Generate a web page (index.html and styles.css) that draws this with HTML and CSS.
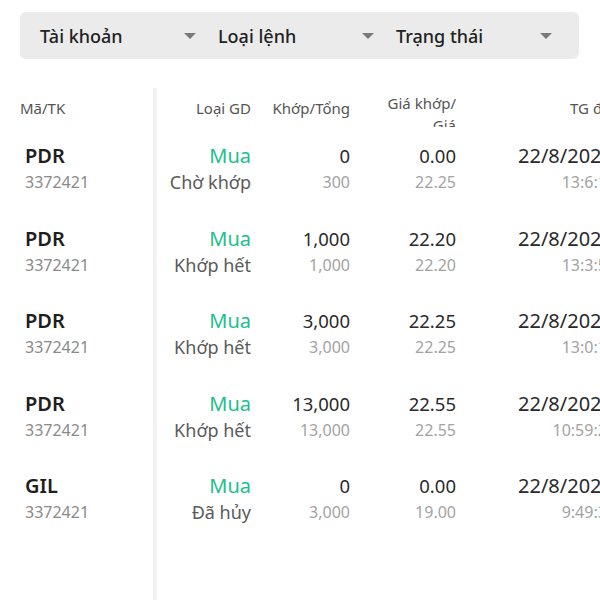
FILE: index.html
```html
<!DOCTYPE html>
<html lang="vi">
<head>
<meta charset="utf-8">
<link rel="stylesheet" href="styles.css">
</head>
<body>
<div class="page">
  <div class="filters">
    <div class="filter"><span>Tài khoản</span><i class="caret"></i></div>
    <div class="filter"><span>Loại lệnh</span><i class="caret"></i></div>
    <div class="filter"><span>Trạng thái</span><i class="caret"></i></div>
  </div>

  <div class="table">
    <div class="fixed">
      <div class="head"><div class="h-left">Mã/TK</div></div>
      <div class="row"><div class="sym">PDR</div><div class="acc">3372421</div></div>
      <div class="row"><div class="sym">PDR</div><div class="acc">3372421</div></div>
      <div class="row"><div class="sym">PDR</div><div class="acc">3372421</div></div>
      <div class="row"><div class="sym">PDR</div><div class="acc">3372421</div></div>
      <div class="row"><div class="sym">GIL</div><div class="acc">3372421</div></div>
    </div>
    <div class="scroll">
      <div class="head cols">
        <div class="hc">Loại GD</div>
        <div class="hc">Khớp/Tổng</div>
        <div class="hc two">Giá khớp/<br>Giá</div>
        <div class="hc">TG đặt</div>
      </div>
      <div class="row cols">
        <div class="c"><div class="buy">Mua</div><div class="status">Chờ khớp</div></div>
        <div class="c"><div class="main">0</div><div class="sub">300</div></div>
        <div class="c"><div class="main">0.00</div><div class="sub">22.25</div></div>
        <div class="c"><div class="main date">22/8/2022</div><div class="sub">13:6:12</div></div>
      </div>
      <div class="row cols">
        <div class="c"><div class="buy">Mua</div><div class="status">Khớp hết</div></div>
        <div class="c"><div class="main">1,000</div><div class="sub">1,000</div></div>
        <div class="c"><div class="main">22.20</div><div class="sub">22.20</div></div>
        <div class="c"><div class="main date">22/8/2022</div><div class="sub">13:3:55</div></div>
      </div>
      <div class="row cols">
        <div class="c"><div class="buy">Mua</div><div class="status">Khớp hết</div></div>
        <div class="c"><div class="main">3,000</div><div class="sub">3,000</div></div>
        <div class="c"><div class="main">22.25</div><div class="sub">22.25</div></div>
        <div class="c"><div class="main date">22/8/2022</div><div class="sub">13:0:12</div></div>
      </div>
      <div class="row cols">
        <div class="c"><div class="buy">Mua</div><div class="status">Khớp hết</div></div>
        <div class="c"><div class="main">13,000</div><div class="sub">13,000</div></div>
        <div class="c"><div class="main">22.55</div><div class="sub">22.55</div></div>
        <div class="c"><div class="main date">22/8/2022</div><div class="sub">10:59:25</div></div>
      </div>
      <div class="row cols">
        <div class="c"><div class="buy">Mua</div><div class="status">Đã hủy</div></div>
        <div class="c"><div class="main">0</div><div class="sub">3,000</div></div>
        <div class="c"><div class="main">0.00</div><div class="sub">19.00</div></div>
        <div class="c"><div class="main date">22/8/2022</div><div class="sub">9:49:32</div></div>
      </div>
    </div>
  </div>
</div>
</body>
</html>
```

FILE: styles.css
```css
* { box-sizing: border-box; }
html, body {
  margin: 0;
  padding: 0;
  background: #fff;
  overflow: hidden;
}
body {
  width: 600px;
  height: 600px;
  font-family: "Noto Sans", "Open Sans", sans-serif;
  color: #222;
}
.page {
  padding-top: 12px;
}
.filters {
  margin: 0 21px 0 20px;
  height: 47px;
  background: #ebebeb;
  border-radius: 6px;
  display: flex;
  align-items: center;
  padding-left: 20px;
}
.filter {
  width: 178px;
  display: flex;
  align-items: center;
  justify-content: space-between;
  padding-right: 22px;
  font-size: 18px;
  font-weight: 500;
  color: #222;
}
.caret {
  width: 0;
  height: 0;
  border-left: 6px solid transparent;
  border-right: 6px solid transparent;
  border-top: 6px solid #7a7a7a;
}
.table {
  display: flex;
  margin-top: 29px;
}
.fixed {
  width: 156px;
  flex: none;
  border-right: 3px solid #f1f1f1;
  box-shadow: 1px 0 1px #f6f6f6;
  height: 520px;
}
.scroll {
  flex: none;
  width: 470px;
}
.head {
  height: 40px;
  overflow: hidden;
  font-size: 15px;
  color: #555;
  display: flex;
  align-items: center;
}
.h-left {
  padding-left: 20px;
}
.cols {
  display: grid;
  grid-template-columns: 95px 99px 106px 160px;
  justify-content: start;
}
.head.cols {
  align-items: center;
}
.hc {
  text-align: right;
  line-height: 20px;
}
.hc.two {
  align-self: start;
  padding-top: 4px;
  line-height: 22px;
  height: 39px;
  overflow: hidden;
}
.row {
  height: 82.5px;
  display: flex;
  flex-direction: column;
  justify-content: center;
  padding-left: 25px;
}
.row.cols {
  display: grid;
  padding-left: 0;
  align-content: center;
  justify-content: start;
}
.sym {
  font-size: 20px;
  font-weight: 600;
  line-height: 26px;
  color: #1e1e1e;
}
.acc {
  font-size: 16px;
  line-height: 26px;
  color: #8a8a8a;
}
.c {
  text-align: right;
  white-space: nowrap;
}
.buy {
  font-size: 20px;
  line-height: 26px;
  color: #21bf8c;
}
.status {
  font-size: 18px;
  line-height: 26px;
  color: #5a5a5a;
}
.main {
  font-size: 18.5px;
  line-height: 26px;
  color: #2a2a2a;
}
.main.date {
  font-size: 20px;
  padding-right: 3px;
}
.sub {
  font-size: 16px;
  line-height: 26px;
  color: #a3a3a3;
}
```
